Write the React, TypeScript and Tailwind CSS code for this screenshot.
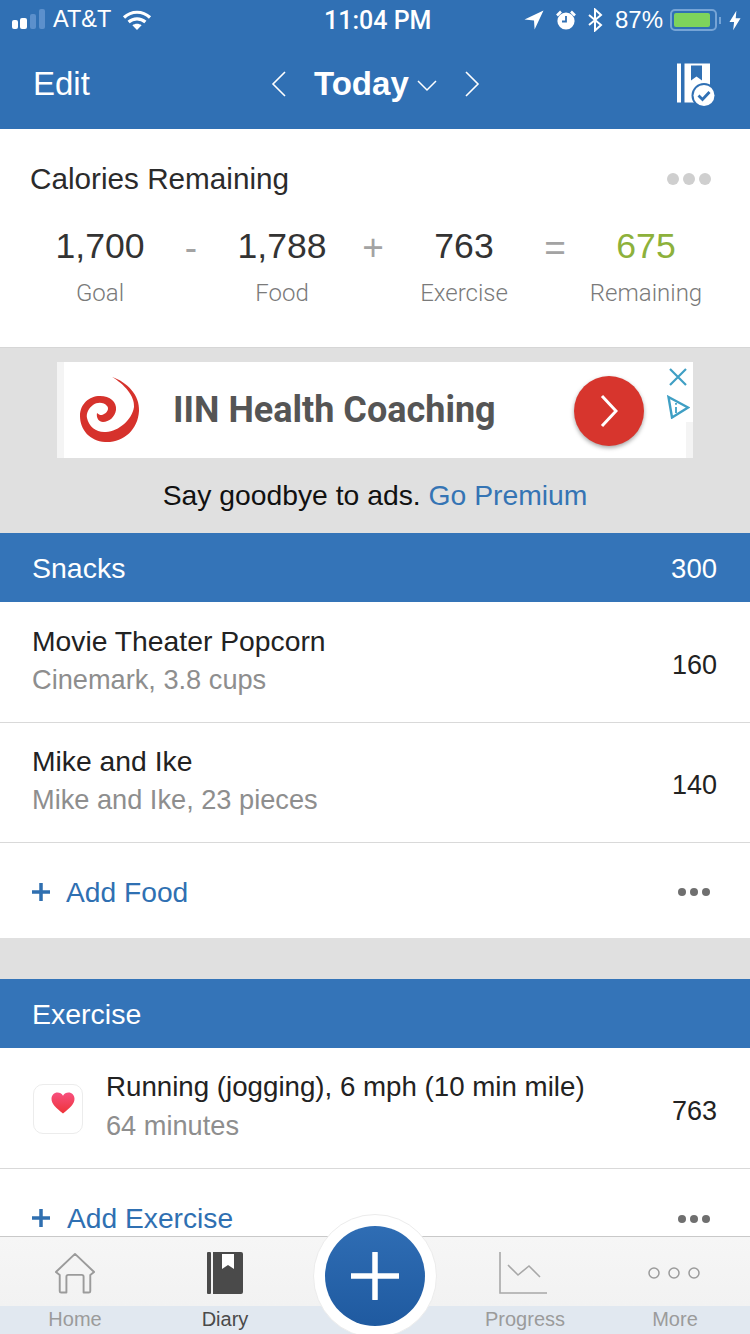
import React from "react";

const FONT = { fontFamily: '"Liberation Sans", Arial, sans-serif' };

function Signal() {
  return (
    <svg width="36" height="24" viewBox="0 0 36 24">
      <rect x="0" y="12" width="6" height="9" rx="2" fill="#fff" />
      <rect x="8" y="10" width="7" height="11" rx="2" fill="#fff" />
      <rect x="18" y="6" width="6" height="15" rx="2" fill="#5c90cc" />
      <rect x="27" y="1" width="6" height="20" rx="2" fill="#5c90cc" />
    </svg>
  );
}

function Wifi() {
  return (
    <svg width="30" height="22" viewBox="0 0 30 22" fill="none" stroke="#fff" strokeLinecap="butt">
      <path d="M2 8.500C9.500 1.500 20.500 1.500 28 8.500" strokeWidth="3.200" />
      <path d="M6.600 13C11.500 8.800 18.500 8.800 23.400 13" strokeWidth="3.200" />
      <path d="M15 21l-4.600-4.700c2.700-2 6.500-2 9.200 0z" fill="#fff" stroke="none" />
    </svg>
  );
}

function StatusRight() {
  return (
    <div className="flex items-center">
      <svg width="20" height="20" viewBox="0 0 20 20" className="mr-[11px]">
        <path d="M19.500 0.500L0.500 9.500l9.500 1 0.600 9z" fill="#fff" />
      </svg>
      <svg width="22" height="22" viewBox="0 0 22 22" className="mr-[10px]">
        <circle cx="11" cy="12" r="8.600" fill="#fff" />
        <path d="M11 7v5.500H7" stroke="#3070b4" strokeWidth="1.800" fill="none" />
        <path d="M2 6.500L6 2.500M20 6.500L16 2.500" stroke="#fff" strokeWidth="2.600" />
      </svg>
      <svg width="16" height="24" viewBox="0 0 16 24" fill="none" stroke="#fff" strokeWidth="2" className="mr-[12px]">
        <path d="M2 7l12 10-6 5.500V1.500L14 7 2 17" />
      </svg>
      <span className="text-[24px] leading-none text-white mr-[7px]">87%</span>
      <div className="w-[47px] h-[22px] border-2 border-[#76a4d6] rounded-[5px] p-[2px] flex">
        <div className="w-[36px] bg-[#7ed35c] rounded-[2px]" />
      </div>
      <div className="w-[2px] h-[7px] bg-[#76a4d6] ml-[2px] mr-[8px]" />
      <svg width="12" height="21" viewBox="0 0 13 22">
        <path d="M8 0.500L0.500 12.500h5L4.500 21.500 12.500 8.500h-5.200z" fill="#fff" />
      </svg>
    </div>
  );
}

function DiaryCheck() {
  return (
    <svg width="42" height="46" viewBox="0 0 42 46">
      <rect x="1" y="2.500" width="4" height="39" fill="#fff" />
      <rect x="8.500" y="2.500" width="25.500" height="39" fill="#fff" />
      <path d="M15 4.500h11v15l-5.500-4-5.500 4z" fill="#3070b4" />
      <circle cx="28" cy="34.500" r="12.500" fill="#3070b4" />
      <circle cx="28" cy="34.500" r="10.500" fill="#fff" />
      <path d="M22.500 34.500l4 4 7-7.500" stroke="#3070b4" strokeWidth="2.800" fill="none" />
    </svg>
  );
}

function Stat({ value, label, green }: { value: string; label: string; green?: boolean }) {
  return (
    <div className="w-[120px] flex flex-col items-center">
      <span className={`text-[35.600px] leading-[40px] ${green ? "text-[#8db13b]" : "text-[#333]"}`}>
        {value}
      </span>
      <span className="text-[24px] leading-[28px] font-light text-[#7a7a7a] mt-[13px]" style={{ fontFamily: "Roboto, sans-serif" }}>{label}</span>
    </div>
  );
}

function Op({ children }: { children: string }) {
  return <span className="w-[62px] text-center text-[37px] leading-[40px] mt-[2px] text-[#a3a3a3]">{children}</span>;
}

function SectionHeader({ title, value }: { title: string; value?: string }) {
  return (
    <div className="h-[69px] bg-[#3474b8] flex items-center justify-between pl-[32px] pr-[33px] pt-[2px] text-white text-[28.500px]">
      <span>{title}</span>
      {value && <span className="text-[27.500px]">{value}</span>}
    </div>
  );
}

function Row({ title, sub, value, h }: { title: string; sub: string; value: string; h: string }) {
  return (
    <div className={`${h} bg-white border-b border-[#d9d9d9] flex items-center justify-between pl-[32px] pr-[33px]`}>
      <div className="flex flex-col mb-[4px]">
        <span className="text-[28.300px] leading-[36px] text-[#222]">{title}</span>
        <span className="text-[27.200px] leading-[36px] text-[#8e8e8e] mt-[3px]">{sub}</span>
      </div>
      <span className="text-[27px] text-[#222] mt-[6px]">{value}</span>
    </div>
  );
}

function Dots() {
  return (
    <div className="flex gap-[4px]">
      <span className="w-[8px] h-[8px] rounded-full bg-[#6f6f6f]" />
      <span className="w-[8px] h-[8px] rounded-full bg-[#6f6f6f]" />
      <span className="w-[8px] h-[8px] rounded-full bg-[#6f6f6f]" />
    </div>
  );
}

function AddRow({ label, h, gap }: { label: string; h: string; gap: string }) {
  return (
    <div className={`${h} bg-white flex items-center justify-between pl-[32px] pr-[40px] pt-[3px]`}>
      <div className={`flex items-center ${gap}`}>
        <svg width="18" height="18" viewBox="0 0 18 18">
          <path d="M9 0v18M0 9h18" stroke="#2f6fb0" strokeWidth="3.500" />
        </svg>
        <span className="text-[28.200px] text-[#2f70b2]">{label}</span>
      </div>
      <Dots />
    </div>
  );
}

function Tab({ label, dark, children }: { label: string; dark?: boolean; children: React.ReactNode }) {
  return (
    <div className="w-[150px] flex flex-col items-center">
      <div className="h-[60px] pt-[15px] flex items-start justify-center">{children}</div>
      <span className={`text-[20px] leading-[24px] mt-[10px] ${dark ? "text-[#4a4a4a]" : "text-[#9b9b9b]"}`}>{label}</span>
    </div>
  );
}

export default function App() {
  return (
    <div className="w-[750px] h-[1334px] relative overflow-hidden flex flex-col bg-[#e0e0e0]" style={FONT}>
      <header className="h-[129px] shrink-0 bg-[#3070b4] text-white flex flex-col">
        <div className="h-[40px] flex items-center justify-between pl-[12px] pr-[9px] relative">
          <div className="flex items-center">
            <Signal />
            <span className="text-[23.500px] leading-none ml-[5px] mr-[11px]">AT&amp;T</span>
            <Wifi />
          </div>
          <span className="absolute left-[324px] top-[7px] text-[25px] leading-[28px] font-medium" style={{ fontFamily: "Roboto, sans-serif" }}>11:04 PM</span>
          <StatusRight />
        </div>
        <div className="flex-1 relative flex items-center justify-between pl-[33px] pr-[32px] pb-[2px]">
          <span className="text-[33px] leading-none">Edit</span>
          <div className="absolute left-[271px] top-[26px] flex items-center">
            <svg width="16" height="26" viewBox="0 0 16 26" fill="none" stroke="#fff" strokeWidth="1.600">
              <path d="M14 1L2 13l12 12" />
            </svg>
            <span className="text-[33px] leading-[36px] font-bold ml-[27px]">Today</span>
            <svg width="20" height="12" viewBox="0 0 20 12" fill="none" stroke="#fff" strokeWidth="1.500" className="ml-[8px] mt-[4px]">
              <path d="M1 1l9 9 9-9" />
            </svg>
            <svg width="16" height="26" viewBox="0 0 16 26" fill="none" stroke="#fff" strokeWidth="1.600" className="ml-[27px]">
              <path d="M2 1l12 12L2 25" />
            </svg>
          </div>
          <DiaryCheck />
        </div>
      </header>

      <main className="flex-1 min-h-0 overflow-hidden">
        <section className="h-[219px] bg-white border-b border-[#d6d6d6] pt-[32px]">
          <div className="flex items-center justify-between pl-[30px] pr-[39px]">
            <span className="text-[29.700px] leading-[36px] text-[#2b2b2b]">Calories Remaining</span>
            <div className="flex gap-[4px]">
              <span className="w-[12px] h-[12px] rounded-full bg-[#cfcfcf]" />
              <span className="w-[12px] h-[12px] rounded-full bg-[#cfcfcf]" />
              <span className="w-[12px] h-[12px] rounded-full bg-[#cfcfcf]" />
            </div>
          </div>
          <div className="flex items-start pl-[40px] mt-[29px]">
            <Stat value="1,700" label="Goal" />
            <Op>-</Op>
            <Stat value="1,788" label="Food" />
            <Op>+</Op>
            <Stat value="763" label="Exercise" />
            <Op>=</Op>
            <Stat value="675" label="Remaining" green />
          </div>
        </section>

        <section className="h-[185px] pt-[14px] flex flex-col items-center">
          <div className="w-[636px] h-[96px] bg-[#f4f4f4] px-[7px] relative">
            <div className="h-full bg-white flex items-center relative">
              <svg width="60" height="66" viewBox="81 378 60 66" className="ml-[16px]">
                <path d="M113 378C128 383 141 396 140 412C139 431 124 444 106 443C91 442 81 431 81 417C81 405 90 397 101 397C111 397 118 403 117 411C116 418 110 423 104 423C100 423 97 419 98 414C100 416 103 417 105 415C109 413 110 409 108 407C105 403 98 403 94 406C90 409 87 414 88 419C90 428 98 434 107 433C120 432 133 421 135 408C136 397 125 385 113 378Z" fill="#d6322c" />
              </svg>
              <span className="ml-[33px] text-[36px] font-bold text-[#555]" style={{ fontFamily: "Roboto, sans-serif" }}>IIN Health Coaching</span>
              <div className="absolute left-[510px] top-[14px] w-[70px] h-[70px] rounded-full bg-[#d7352d] shadow-[0_2px_4px_rgba(0,0,0,0.35)] flex items-center justify-center">
                <svg width="18" height="34" viewBox="0 0 18 34" fill="none" stroke="#fff" strokeWidth="3">
                  <path d="M2 2l14 15L2 32" />
                </svg>
              </div>
              <div className="absolute right-[-7px] top-0 w-[7px] h-[60px] bg-white" />
              <svg width="20" height="20" viewBox="0 0 20 20" className="absolute right-[-2px] top-[5px]" fill="none" stroke="#3f9fc4" strokeWidth="2.200">
                <path d="M2 2l16 16M18 2L2 18" />
              </svg>
              <svg width="24" height="24" viewBox="0 0 24 24" className="absolute right-[-4px] top-[33px]" fill="none" stroke="#3f9fc4" strokeWidth="2.400">
                <path d="M2.500 2L22 12.500 6 22.500z" />
                <path d="M10 12v6M10 8v1.800" strokeWidth="1.800" />
              </svg>
            </div>
          </div>
          <p className="mt-[21px] text-[28.300px] leading-[32px] text-[#111]">
            Say goodbye to ads. <span className="text-[#3574b4]">Go Premium</span>
          </p>
        </section>

        <SectionHeader title="Snacks" value="300" />
        <Row h="h-[121px]" title="Movie Theater Popcorn" sub="Cinemark, 3.8 cups" value="160" />
        <Row h="h-[120px]" title="Mike and Ike" sub="Mike and Ike, 23 pieces" value="140" />
        <AddRow label="Add Food" h="h-[95px]" gap="gap-[16px]" />
        <div className="h-[41px]" />
        <SectionHeader title="Exercise" />
        <div className="h-[121px] bg-white border-b border-[#d9d9d9] flex items-center pl-[33px] pr-[33px]">
          <div className="w-[50px] h-[50px] rounded-[10px] border border-[#ececec] flex items-start justify-start pl-[17px] pt-[7px] mr-[23px] mt-[1px]">
            <svg width="24" height="22" viewBox="0 0 24 22">
              <defs>
                <linearGradient id="hg" x1="0" y1="0" x2="0" y2="1">
                  <stop offset="0" stopColor="#f7507f" />
                  <stop offset="1" stopColor="#ee3338" />
                </linearGradient>
              </defs>
              <path d="M12 21.500C5 16 0.500 12 0.500 6.800 0.500 3 3.200 0.500 6.500 0.500c2.300 0 4.300 1.200 5.500 3.200 1.200-2 3.200-3.200 5.500-3.200 3.300 0 6 2.500 6 6.300 0 5.200-4.500 9.200-11.500 14.700z" fill="url(#hg)" />
            </svg>
          </div>
          <div className="flex flex-col flex-1 mb-[4px]">
            <span className="text-[27.700px] leading-[36px] text-[#222]">Running (jogging), 6 mph (10 min mile)</span>
            <span className="text-[27.200px] leading-[36px] text-[#8e8e8e] mt-[3px]">64 minutes</span>
          </div>
          <span className="text-[27px] text-[#222] mt-[6px]">763</span>
        </div>
        <AddRow label="Add Exercise" h="h-[96px]" gap="gap-[17px]" />
      </main>

      <nav className="h-[98px] shrink-0 border-t border-[#c9c9c9] flex bg-[linear-gradient(#f6f6f6_0,#f2f2f2_69px,#e1e8f0_69px,#e1e8f0_100%)]">
        <Tab label="Home">
          <svg width="44" height="42" viewBox="0 0 44 44" fill="none" stroke="#9b9b9b" strokeWidth="2" strokeLinejoin="round">
            <path d="M2 21L22 2l20 19-4 3v17a1.500 1.500 0 0 1-1.500 1.500H31V26a2 2 0 0 0-2-2H15a2 2 0 0 0-2 2v16.500H7.500A1.500 1.500 0 0 1 6 41V24z" />
          </svg>
        </Tab>
        <Tab label="Diary" dark>
          <svg width="36" height="42" viewBox="0 0 36 42">
            <rect x="0" y="0" width="4" height="42" rx="1" fill="#4a4a4a" />
            <path d="M6 0h28a2 2 0 0 1 2 2v38a2 2 0 0 1-2 2H6z" fill="#4a4a4a" />
            <path d="M15 2h12v15l-6-4-6 4z" fill="#fff" />
          </svg>
        </Tab>
        <div className="w-[150px]" />
        <Tab label="Progress">
          <svg width="48" height="42" viewBox="0 0 48 42" fill="none" stroke="#a8a8a8" strokeWidth="1.600" className="mr-[4px]">
            <path d="M1 0v41h47" />
            <path d="M9 13l10 10 11-9 11 11" />
          </svg>
        </Tab>
        <Tab label="More">
          <svg width="52" height="14" viewBox="0 0 52 14" fill="none" stroke="#9b9b9b" strokeWidth="1.500" className="mt-[14px] mr-[2px]">
            <circle cx="6" cy="7" r="5" />
            <circle cx="26" cy="7" r="5" />
            <circle cx="46" cy="7" r="5" />
          </svg>
        </Tab>
      </nav>

      <div className="absolute left-[313px] top-[1214px] w-[124px] h-[124px] rounded-full bg-white border border-[#ececec] flex items-center justify-center">
        <div className="w-[100px] h-[100px] rounded-full bg-[linear-gradient(#2f6db4,#1f5aa0)] flex items-center justify-center">
          <svg width="48" height="48" viewBox="0 0 48 48">
            <path d="M24 1v46M1 24h46" stroke="#fff" strokeWidth="5.500" strokeLinecap="round" />
          </svg>
        </div>
      </div>
    </div>
  );
}
